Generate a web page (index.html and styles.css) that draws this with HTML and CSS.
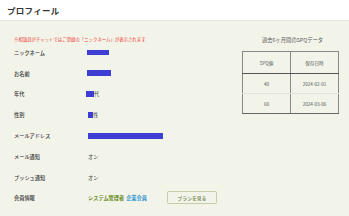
FILE: index.html
```html
<!DOCTYPE html>
<html lang="ja">
<head>
<meta charset="utf-8">
<link rel="stylesheet" href="styles.css">
</head>
<body>
<header class="topbar"><h1 class="title">プロフィール</h1></header>
<main class="content">
  <section class="profile">
    <p class="notice">※相談員がチャットではご登録の「ニックネーム」が表示されます</p>
    <div class="row"><span class="label">ニックネーム</span><span class="value"><span class="mask" style="width:22px"></span></span></div>
    <div class="row"><span class="label">お名前</span><span class="value"><span class="mask" style="width:24px"></span></span></div>
    <div class="row"><span class="label">年代</span><span class="value shift-l"><span class="mask" style="width:8px"></span>代</span></div>
    <div class="row"><span class="label">性別</span><span class="value shift-r"><span class="mask" style="width:5px"></span>性</span></div>
    <div class="row"><span class="label">メールアドレス</span><span class="value shift-r"><span class="mask tall" style="width:75px"></span></span></div>
    <div class="row"><span class="label">メール通知</span><span class="value shift-r">オン</span></div>
    <div class="row"><span class="label">プッシュ通知</span><span class="value shift-r">オン</span></div>
    <div class="row"><span class="label">会員情報</span><span class="value shift-r"><span class="role">システム管理者</span><span class="member">企業会員</span><button class="plan">プランを見る</button></span></div>
  </section>
  <aside class="spq">
    <p class="spq-title">過去6ヶ月間のSPQデータ</p>
    <table class="spq-table">
      <thead><tr><th>SPQ値</th><th>保存日時</th></tr></thead>
      <tbody>
        <tr><td>40</td><td>2024-02-01</td></tr>
        <tr><td>60</td><td>2024-03-06</td></tr>
      </tbody>
    </table>
  </aside>
</main>
</body>
</html>
```
FILE: styles.css
```css
html, body {
  margin: 0;
  padding: 0;
}
body {
  width: 349px;
  height: 216px;
  overflow: hidden;
  background: #f2f4ea;
  font-family: "Noto Sans CJK JP", "Noto Sans", sans-serif;
  color: #444;
}
.topbar {
  height: 21px;
  background: #fff;
  border-bottom: 1px solid #e6e8e0;
  box-sizing: border-box;
  display: flex;
  align-items: center;
  padding-left: 7px;
}
.title {
  margin: 0;
  font-size: 8.5px;
  font-weight: 700;
  letter-spacing: 0.3px;
  color: #333;
  line-height: 1;
}
.content {
  display: flex;
}
.profile {
  flex: 1;
  padding: 15px 0 0 14px;
}
.notice {
  margin: 0;
  height: 6px;
  line-height: 6px;
  font-size: 4.4px;
  color: #f0342e;
  white-space: nowrap;
}
.row {
  height: 20.8px;
  display: flex;
  align-items: center;
  font-size: 5.2px;
}
.label {
  width: 73px;
  flex: none;
  color: #333;
  font-weight: 500;
}
.value {
  display: flex;
  align-items: center;
  color: #444;
}
.shift-l { margin-left: -1px; }
.shift-r { margin-left: 1px; }
.mask {
  display: inline-block;
  height: 5.5px;
  background: #3d3fd4;
}
.mask.tall { height: 6px; }
.role {
  color: #6a8a22;
  font-weight: 700;
}
.member {
  color: #3496d0;
  font-weight: 700;
  margin-left: 2px;
}
.plan {
  margin-left: 20px;
  width: 50px;
  height: 13px;
  padding: 0;
  background: transparent;
  border: 1px solid #c6cda6;
  border-radius: 1.5px;
  font-family: inherit;
  font-size: 4.8px;
  color: #8a9868;
  font-weight: 700;
}
.spq {
  width: 97px;
  margin-right: 10px;
  padding-top: 16px;
}
.spq-title {
  margin: 0 0 7px;
  height: 7px;
  line-height: 7px;
  text-align: center;
  font-size: 5.3px;
  color: #555;
  padding-left: 4px;
}
.spq-table {
  width: 97px;
  border-collapse: collapse;
  font-size: 4.6px;
  color: #555;
  table-layout: fixed;
}
.spq-table th, .spq-table td {
  text-align: center;
  font-weight: 400;
  padding: 0;
  border-left: 1px solid #888;
  border-right: 1px solid #888;
}
.spq-table th {
  height: 21px;
  border-top: 1px solid #888;
  border-bottom: 1px solid #555;
}
.spq-table td {
  height: 19px;
  border-bottom: 1px solid #e2e4da;
}
.spq-table tbody tr:last-child td {
  border-bottom: 1px solid #666;
}
```
